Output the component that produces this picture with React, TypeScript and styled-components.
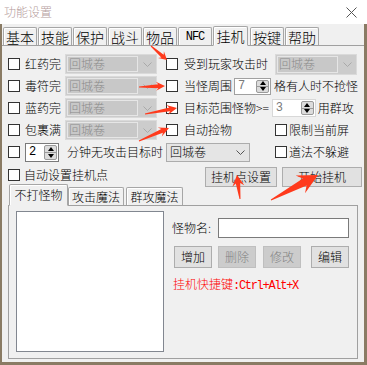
import React from 'react';
import styled, { createGlobalStyle } from 'styled-components';

const CJK = '"Noto Sans CJK SC", "Noto Sans", sans-serif';
const MONO = '"Liberation Mono", "DejaVu Sans Mono", monospace';

const GlobalStyle = createGlobalStyle`
  html, body {
    margin: 0;
    padding: 0;
    background: #f0f0f0;
  }
  body {
    font-family: ${CJK};
    font-weight: 300;
  }
`;

const Window = styled.div`
  position: relative;
  width: 367px;
  height: 365px;
  display: flex;
  flex-direction: column;
  overflow: hidden;
  background: #fff;
`;

const TitleBar = styled.div`
  height: 24px;
  flex-shrink: 0;
  display: flex;
  align-items: center;
  justify-content: space-between;
  padding: 0 10px 0 4px;
  background: #fff;
`;

const Title = styled.span`
  font-size: 12px;
  line-height: 1;
  color: #b59c9c;
`;

const Body = styled.div`
  flex: 1;
  display: flex;
  flex-direction: column;
  background: #f0f0f0;
  border: solid #8a7b64;
  border-width: 0 3px 3px 2px;
`;

const TabStrip = styled.div<{ $h: number; $pl: number }>`
  height: ${p => p.$h}px;
  flex-shrink: 0;
  display: flex;
  align-items: flex-end;
  padding-left: ${p => p.$pl}px;
`;

const Tab = styled.div<{ $w: number; $h: number; $active?: boolean; $mono?: boolean; $size: number; $mr?: number }>`
  position: relative;
  z-index: ${p => (p.$active ? 1 : 0)};
  box-sizing: border-box;
  width: ${p => p.$w}px;
  height: ${p => p.$h}px;
  margin-right: ${p => p.$mr ?? 1}px;
  margin-bottom: ${p => (p.$active ? -1 : 0)}px;
  display: flex;
  align-items: center;
  justify-content: center;
  border: 1px solid #a6a6a6;
  border-bottom: ${p => (p.$active ? '1px solid #f0f0f0' : 'none')};
  border-radius: 2px 2px 0 0;
  box-shadow: inset 1px 1px 0 #fff;
  background: #f0f0f0;
  font-family: ${p => (p.$mono ? MONO : CJK)};
  font-size: ${p => (p.$mono ? 12 : p.$size)}px;
  font-weight: ${p => (p.$mono ? 400 : 300)};
  letter-spacing: ${p => (p.$mono ? '-1px' : '0')};
  line-height: 1;
  color: #000;
  white-space: nowrap;
`;

const Panel = styled.div`
  flex: 1;
  display: flex;
  flex-direction: column;
  border-top: 1px solid #a0a0a0;
  padding: 7px 0 0 6px;
`;

const Row = styled.div<{ $h?: number; $align?: string }>`
  display: flex;
  align-items: ${p => p.$align ?? 'center'};
  height: ${p => p.$h ?? 22}px;
  flex-shrink: 0;
`;

const LeftCell = styled.div`
  display: flex;
  align-items: center;
  width: 158px;
  flex-shrink: 0;
`;

const CheckBox = styled.span<{ $ml?: number; $mt?: number }>`
  box-sizing: border-box;
  width: 12px;
  height: 12px;
  flex-shrink: 0;
  margin-left: ${p => p.$ml ?? 0}px;
  margin-top: ${p => p.$mt ?? 0}px;
  border: 1px solid #333;
  background: #fff;
`;

const Text = styled.span<{ $ml?: number; $mt?: number }>`
  margin-left: ${p => p.$ml ?? 0}px;
  margin-top: ${p => p.$mt ?? 0}px;
  font-size: 12px;
  font-weight: 300;
  line-height: 1;
  color: #000;
  white-space: nowrap;
`;

const ComboBox = styled.div<{ $w: number; $h: number; $off?: boolean; $ml?: number }>`
  box-sizing: border-box;
  width: ${p => p.$w}px;
  height: ${p => p.$h}px;
  margin-left: ${p => p.$ml ?? 0}px;
  flex-shrink: 0;
  display: flex;
  align-items: stretch;
  border: 1px solid ${p => (p.$off ? '#dadada' : '#acacac')};
  background: ${p => (p.$off ? '#cccccc' : '#e5e5e5')};
`;

const ComboValue = styled.div<{ $off?: boolean }>`
  flex: 1;
  display: flex;
  align-items: center;
  margin: ${p => (p.$off ? '1px 0 1px 1px' : '0')};
  padding-left: ${p => (p.$off ? 1 : 3)}px;
  border: ${p => (p.$off ? '1px solid #e6e6e6' : 'none')};
  background: ${p => (p.$off ? '#c8c8c8' : 'transparent')};
  font-size: 12px;
  line-height: 1;
  color: ${p => (p.$off ? '#8a8a8a' : '#000')};
`;

const ComboArrow = styled.div<{ $off?: boolean }>`
  width: 18px;
  display: flex;
  align-items: center;
  justify-content: center;
  color: ${p => (p.$off ? '#a9a9a9' : '#555')};
`;

const SpinBox = styled.div<{ $w: number; $h: number; $ml?: number; $border: string }>`
  box-sizing: border-box;
  width: ${p => p.$w}px;
  height: ${p => p.$h}px;
  margin-left: ${p => p.$ml ?? 0}px;
  flex-shrink: 0;
  display: flex;
  align-items: center;
  padding: 1px 1px 1px 3px;
  border: 1px solid ${p => p.$border};
  background: #fff;
`;

const SpinValue = styled.span<{ $muted?: boolean }>`
  flex: 1;
  font-family: ${MONO};
  font-size: 12px;
  line-height: 1;
  color: ${p => (p.$muted ? '#7a7a7a' : '#000')};
`;

const SpinButtons = styled.div`
  box-sizing: border-box;
  width: 13px;
  height: 100%;
  display: flex;
  flex-direction: column;
  border: 1px solid #9a9a9a;
  border-radius: 2px;
  background: #dcdcdc;
`;

const SpinHalf = styled.div<{ $top?: boolean }>`
  flex: 1;
  display: flex;
  align-items: center;
  justify-content: center;
  border-bottom: ${p => (p.$top ? '1px solid #9a9a9a' : 'none')};
`;

const Tri = styled.span<{ $up?: boolean }>`
  width: 0;
  height: 0;
  border-left: 3.5px solid transparent;
  border-right: 3.5px solid transparent;
  border-${p => (p.$up ? 'bottom' : 'top')}: 4px solid #000;
`;

const Btn = styled.button<{ $w: number; $h: number; $ml?: number; $mt?: number }>`
  box-sizing: border-box;
  width: ${p => p.$w}px;
  height: ${p => p.$h}px;
  margin: ${p => p.$mt ?? 0}px 0 0 ${p => p.$ml ?? 0}px;
  padding: 0;
  flex-shrink: 0;
  border: 1px solid #adadad;
  background: #e1e1e1;
  font-family: ${CJK};
  font-size: 12px;
  font-weight: 300;
  line-height: 1;
  color: #000;

  &:disabled {
    border-color: #bfbfbf;
    background: #cccccc;
    color: #838383;
  }
`;

const ButtonGroup = styled.div`
  display: flex;
  gap: 5px;
  margin-left: auto;
  margin-right: 2px;
`;

const InnerTabs = styled.div`
  flex: 1;
  display: flex;
  flex-direction: column;
  margin: 0 6px 3px 0;
`;

const InnerPanel = styled.div`
  flex: 1;
  display: flex;
  border: 1px solid #a0a0a0;
  padding: 5px 0 6px 7px;
`;

const ListBox = styled.div`
  box-sizing: border-box;
  width: 148px;
  border: 1px solid #828790;
  background: #fff;
`;

const SidePane = styled.div`
  display: flex;
  flex-direction: column;
  margin-left: 8px;
`;

const NameRow = styled.div`
  display: flex;
  align-items: center;
  height: 20px;
  margin-top: 7px;
`;

const TextInput = styled.div`
  box-sizing: border-box;
  width: 131px;
  height: 20px;
  margin-left: 7px;
  border: 1px solid #7a7a7a;
  background: #fff;
`;

const EditRow = styled.div`
  display: flex;
  margin-top: 8px;
`;

const Hotkey = styled.div`
  margin: 9px 0 0 1px;
  font-size: 12px;
  font-weight: 300;
  line-height: 14px;
  color: #ff0000;
  white-space: nowrap;
`;

const HotkeyCode = styled.span`
  font-family: ${MONO};
  font-weight: 400;
  letter-spacing: -1.3px;
`;

const Overlay = styled.svg`
  position: absolute;
  left: 0;
  top: 0;
  pointer-events: none;
`;

const Chevron = () => (
  <svg width="9" height="5" viewBox="0 0 9 5">
    <polyline points="0.5,0.5 4.5,4.5 8.5,0.5" fill="none" stroke="currentColor" strokeWidth="1" />
  </svg>
);

const CloseIcon = () => (
  <svg width="11" height="11" viewBox="0 0 11 11">
    <path d="M0.5 0.5 L10.5 10.5 M10.5 0.5 L0.5 10.5" stroke="#555" strokeWidth="1" fill="none" />
  </svg>
);

const Combo = ({ w, h, off, ml, value }: { w: number; h: number; off?: boolean; ml?: number; value: string }) => (
  <ComboBox $w={w} $h={h} $off={off} $ml={ml}>
    <ComboValue $off={off}>{value}</ComboValue>
    <ComboArrow $off={off}>
      <Chevron />
    </ComboArrow>
  </ComboBox>
);

const Spin = ({ w, h, ml, value, muted, border }: { w: number; h: number; ml?: number; value: string; muted?: boolean; border: string }) => (
  <SpinBox $w={w} $h={h} $ml={ml} $border={border}>
    <SpinValue $muted={muted}>{value}</SpinValue>
    <SpinButtons>
      <SpinHalf $top>
        <Tri $up />
      </SpinHalf>
      <SpinHalf>
        <Tri />
      </SpinHalf>
    </SpinButtons>
  </SpinBox>
);

// red annotation arrows: tail point -> tip, head length, head half width, shaft half width
const arrowPoints = (x1: number, y1: number, x2: number, y2: number, head: number, wing: number, shaft: number) => {
  const len = Math.hypot(x2 - x1, y2 - y1);
  const ux = (x2 - x1) / len;
  const uy = (y2 - y1) / len;
  const nx = -uy;
  const ny = ux;
  const bx = x2 - ux * head;
  const by = y2 - uy * head;
  const sx = bx + ux * head * 0.25;
  const sy = by + uy * head * 0.25;
  const pts = [
    [x1 + nx * 0.5, y1 + ny * 0.5],
    [sx + nx * shaft, sy + ny * shaft],
    [bx + nx * wing, by + ny * wing],
    [x2, y2],
    [bx - nx * wing, by - ny * wing],
    [sx - nx * shaft, sy - ny * shaft],
    [x1 - nx * 0.5, y1 - ny * 0.5],
  ];
  return pts.map(p => `${p[0].toFixed(1)},${p[1].toFixed(1)}`).join(' ');
};

const arrows = [
  arrowPoints(151, 46, 167, 60, 8, 4.5, 1.8),
  arrowPoints(139, 87, 165, 86, 9, 4.5, 2),
  arrowPoints(145, 114, 177, 108, 10, 5, 2),
  arrowPoints(139, 141, 169, 128, 10, 5, 2),
  arrowPoints(240, 199, 237, 175, 11, 6, 2.2),
  arrowPoints(271, 200, 318, 175, 20, 10, 4),
];

const mainTabs = ['基本', '技能', '保护', '战斗', '物品', 'NFC', '挂机', '按键', '帮助'];

export default function App() {
  return (
    <>
      <GlobalStyle />
      <Window>
        <TitleBar>
          <Title>功能设置</Title>
          <CloseIcon />
        </TitleBar>
        <Body>
          <TabStrip $h={21} $pl={1}>
            {mainTabs.map(t => {
              const active = t === '挂机';
              return (
                <Tab
                  key={t}
                  $w={active ? 35 : 34}
                  $h={active ? 20 : 18}
                  $mr={active ? 2 : 1}
                  $size={14}
                  $active={active}
                  $mono={t === 'NFC'}
                >
                  {t}
                </Tab>
              );
            })}
          </TabStrip>
          <Panel>
            <Row>
              <LeftCell>
                <CheckBox />
                <Text $ml={5}>红药完</Text>
                <Combo w={92} h={20} off ml={4} value="回城卷" />
              </LeftCell>
              <CheckBox />
              <Text $ml={6}>受到玩家攻击时</Text>
              <Combo w={82} h={21} off ml={7} value="回城卷" />
            </Row>
            <Row>
              <LeftCell>
                <CheckBox />
                <Text $ml={5}>毒符完</Text>
                <Combo w={92} h={20} off ml={4} value="回城卷" />
              </LeftCell>
              <CheckBox />
              <Text $ml={6}>当怪周围</Text>
              <Spin w={37} h={17} ml={2} value="7" muted border="#a0a0a0" />
              <Text $ml={3}>格有人时不抢怪</Text>
            </Row>
            <Row>
              <LeftCell>
                <CheckBox />
                <Text $ml={5}>蓝药完</Text>
                <Combo w={92} h={20} off ml={4} value="回城卷" />
              </LeftCell>
              <CheckBox />
              <Text $ml={6}>目标范围怪物&gt;=</Text>
              <Spin w={44} h={18} ml={3} value="3" muted border="#d8d8d8" />
              <Text $ml={2}>用群攻</Text>
            </Row>
            <Row>
              <LeftCell>
                <CheckBox />
                <Text $ml={5}>包裹满</Text>
                <Combo w={92} h={20} off ml={4} value="回城卷" />
              </LeftCell>
              <CheckBox />
              <Text $ml={6}>自动捡物</Text>
              <CheckBox $ml={43} />
              <Text $ml={2}>限制当前屏</Text>
            </Row>
            <Row>
              <CheckBox />
              <Spin w={34} h={19} ml={5} value="2" border="#7a7a7a" />
              <Text $ml={8}>分钟无攻击目标时</Text>
              <Combo w={84} h={19} ml={3} value="回城卷" />
              <CheckBox $ml={25} />
              <Text $ml={2}>道法不躲避</Text>
            </Row>
            <Row $h={20} $align="flex-start">
              <CheckBox $mt={6} />
              <Text $ml={4} $mt={6}>自动设置挂机点</Text>
              <ButtonGroup>
                <Btn $w={72} $h={20} $mt={4}>挂机点设置</Btn>
                <Btn $w={80} $h={20} $mt={4}>开始挂机</Btn>
              </ButtonGroup>
            </Row>
            <InnerTabs>
              <TabStrip $h={22} $pl={1}>
                <Tab $w={59} $h={22} $mr={0} $size={12} $active>不打怪物</Tab>
                <Tab $w={56} $h={18} $mr={2} $size={12}>攻击魔法</Tab>
                <Tab $w={57} $h={18} $size={12}>群攻魔法</Tab>
              </TabStrip>
              <InnerPanel>
                <ListBox />
                <SidePane>
                  <NameRow>
                    <Text>怪物名:</Text>
                    <TextInput />
                  </NameRow>
                  <EditRow>
                    <Btn $w={38} $h={22} $ml={2}>增加</Btn>
                    <Btn $w={38} $h={22} $ml={6} disabled>删除</Btn>
                    <Btn $w={38} $h={22} $ml={7} disabled>修改</Btn>
                    <Btn $w={38} $h={22} $ml={10}>编辑</Btn>
                  </EditRow>
                  <Hotkey>
                    挂机快捷键<HotkeyCode>:Ctrl+Alt+X</HotkeyCode>
                  </Hotkey>
                </SidePane>
              </InnerPanel>
            </InnerTabs>
          </Panel>
        </Body>
        <Overlay width="367" height="365" viewBox="0 0 367 365">
          {arrows.map((pts, i) => (
            <polygon key={i} points={pts} fill="#ff3a1c" />
          ))}
        </Overlay>
      </Window>
    </>
  );
}
